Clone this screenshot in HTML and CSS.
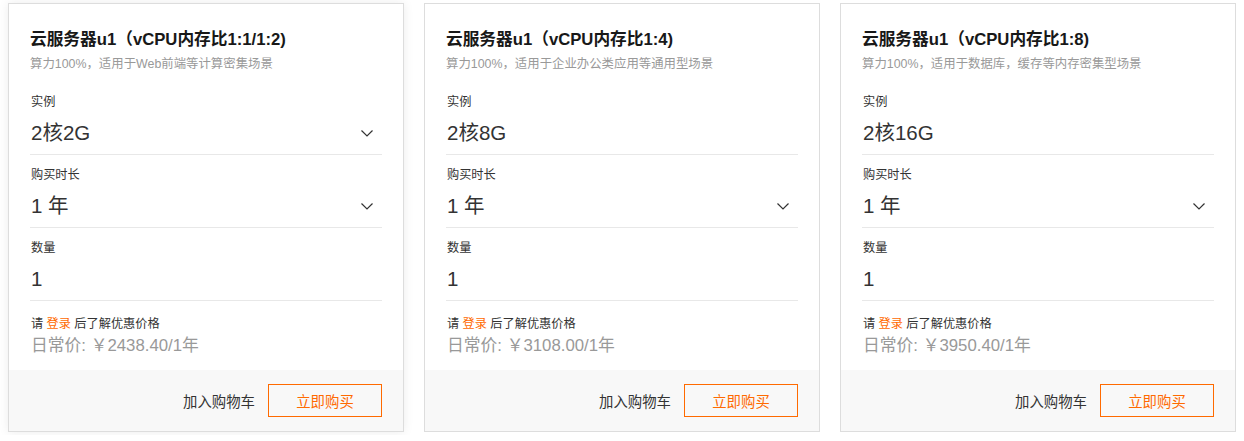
FILE: index.html
```html
<!DOCTYPE html>
<html lang="zh-CN">
<head>
<meta charset="utf-8">
<title>云服务器u1</title>
<link rel="stylesheet" href="styles.css">
</head>
<body>
<div class="cards">
  <div class="card active">
    <div class="body">
      <div class="head">
        <div class="title">云服务器u1（vCPU内存比1:1/1:2)</div>
        <div class="sub">算力100%，适用于Web前端等计算密集场景</div>
      </div>
      <div class="row">
        <div class="label">实例</div>
        <div class="value"><span>2核2G</span><svg class="chev" width="12" height="7" viewBox="0 0 12 7"><polyline points="0.5,0.5 6,6 11.5,0.5" fill="none" stroke="#333" stroke-width="1.2"/></svg></div>
      </div>
      <div class="row">
        <div class="label">购买时长</div>
        <div class="value"><span>1 年</span><svg class="chev" width="12" height="7" viewBox="0 0 12 7"><polyline points="0.5,0.5 6,6 11.5,0.5" fill="none" stroke="#333" stroke-width="1.2"/></svg></div>
      </div>
      <div class="row">
        <div class="label">数量</div>
        <div class="value"><span>1</span></div>
      </div>
      <div class="price">
        <div class="login">请 <a class="link">登录</a> 后了解优惠价格</div>
        <div class="normal">日常价: ￥2438.40/1年</div>
      </div>
    </div>
    <div class="foot">
      <span class="cart">加入购物车</span>
      <span class="buy">立即购买</span>
    </div>
  </div>

  <div class="card">
    <div class="body">
      <div class="head">
        <div class="title">云服务器u1（vCPU内存比1:4)</div>
        <div class="sub">算力100%，适用于企业办公类应用等通用型场景</div>
      </div>
      <div class="row">
        <div class="label">实例</div>
        <div class="value"><span>2核8G</span></div>
      </div>
      <div class="row">
        <div class="label">购买时长</div>
        <div class="value"><span>1 年</span><svg class="chev" width="12" height="7" viewBox="0 0 12 7"><polyline points="0.5,0.5 6,6 11.5,0.5" fill="none" stroke="#333" stroke-width="1.2"/></svg></div>
      </div>
      <div class="row">
        <div class="label">数量</div>
        <div class="value"><span>1</span></div>
      </div>
      <div class="price">
        <div class="login">请 <a class="link">登录</a> 后了解优惠价格</div>
        <div class="normal">日常价: ￥3108.00/1年</div>
      </div>
    </div>
    <div class="foot">
      <span class="cart">加入购物车</span>
      <span class="buy">立即购买</span>
    </div>
  </div>

  <div class="card">
    <div class="body">
      <div class="head">
        <div class="title">云服务器u1（vCPU内存比1:8)</div>
        <div class="sub">算力100%，适用于数据库，缓存等内存密集型场景</div>
      </div>
      <div class="row">
        <div class="label">实例</div>
        <div class="value"><span>2核16G</span></div>
      </div>
      <div class="row">
        <div class="label">购买时长</div>
        <div class="value"><span>1 年</span><svg class="chev" width="12" height="7" viewBox="0 0 12 7"><polyline points="0.5,0.5 6,6 11.5,0.5" fill="none" stroke="#333" stroke-width="1.2"/></svg></div>
      </div>
      <div class="row">
        <div class="label">数量</div>
        <div class="value"><span>1</span></div>
      </div>
      <div class="price">
        <div class="login">请 <a class="link">登录</a> 后了解优惠价格</div>
        <div class="normal">日常价: ￥3950.40/1年</div>
      </div>
    </div>
    <div class="foot">
      <span class="cart">加入购物车</span>
      <span class="buy">立即购买</span>
    </div>
  </div>
</div>
</body>
</html>
```

FILE: styles.css
```css
html, body {
  margin: 0;
  padding: 0;
  background: #fff;
}
body {
  font-family: "Liberation Sans", "Noto Sans CJK SC", sans-serif;
  color: #333;
}
.cards {
  display: flex;
  gap: 20px;
  padding: 3px 8px;
}
.card {
  width: 396px;
  box-sizing: border-box;
  border: 1px solid #ddd;
  background: #fff;
  display: flex;
  flex-direction: column;
}
.card.active {
  box-shadow: 0 0 10px rgba(0, 0, 0, 0.08);
}
.body {
  padding: 24px 21px 0 21px;
}
.head {
  margin-bottom: 9px;
}
.title {
  font-size: 16.7px;
  font-weight: bold;
  line-height: 24px;
  color: #181818;
}
.sub {
  margin-top: 3px;
  font-size: 12.4px;
  line-height: 18px;
  color: #999;
}
.row {
  padding: 11px 0 6px 1px;
  border-bottom: 1px solid #e8e8e8;
}
.label {
  font-size: 12.2px;
  line-height: 18px;
  color: #333;
}
.value {
  margin-top: 7px;
  height: 30px;
  display: flex;
  align-items: center;
  justify-content: space-between;
  font-size: 20.5px;
  line-height: 30px;
  color: #333;
}
.chev {
  margin-right: 9px;
  display: block;
}
.price {
  padding: 14px 0 12px 1px;
}
.login {
  font-size: 12.2px;
  line-height: 18px;
  color: #333;
}
.link {
  color: #ff6a00;
}
.normal {
  margin-top: 1px;
  font-size: 16.8px;
  line-height: 24px;
  color: #999;
}
.foot {
  background: #f8f8f8;
  padding: 14px 21px 14px 21px;
  display: flex;
  justify-content: flex-end;
  align-items: center;
  gap: 13px;
}
.cart {
  font-size: 14.4px;
  color: #333;
}
.buy {
  width: 114px;
  height: 33px;
  box-sizing: border-box;
  border: 1px solid #ff6a00;
  color: #ff6a00;
  font-size: 14.4px;
  display: flex;
  align-items: center;
  justify-content: center;
}
```
